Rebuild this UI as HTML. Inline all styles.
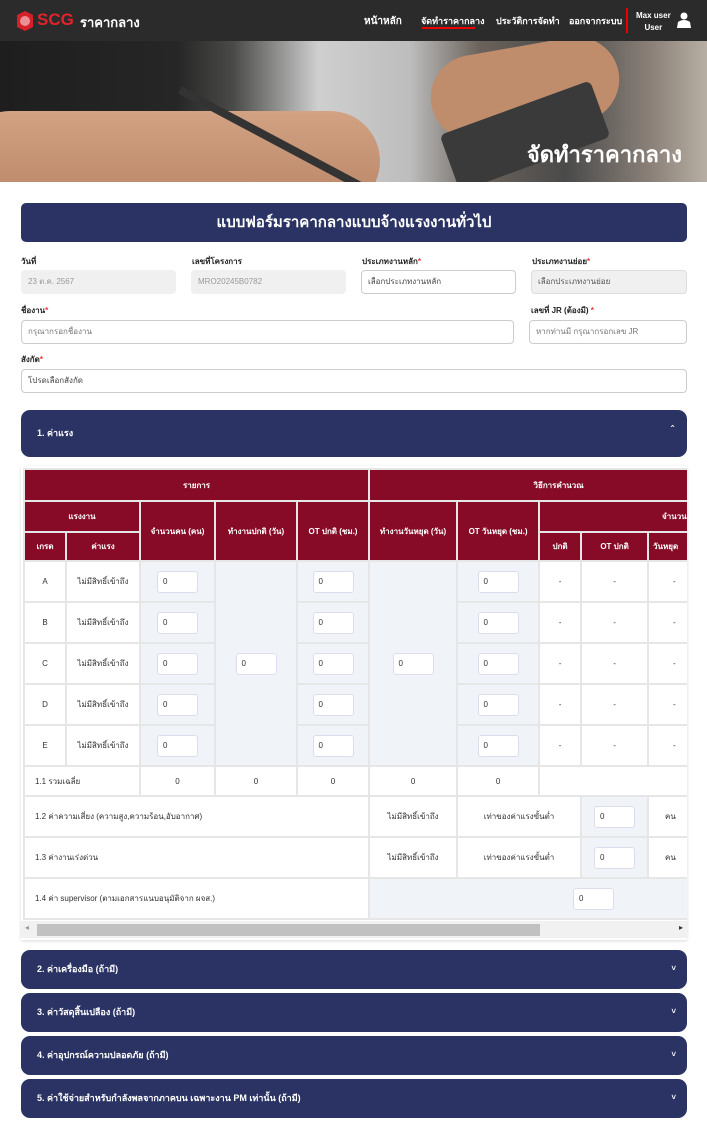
<!DOCTYPE html>
<html><head><meta charset="utf-8">
<style>
*{box-sizing:border-box;margin:0;padding:0}
body{width:707px;height:1124px;overflow:hidden;background:#fff;font-family:"Liberation Sans","DejaVu Sans",sans-serif;color:#222;position:relative}
.nav{position:absolute;left:0;top:0;width:707px;height:41px;background:#2b2b2b;color:#fff}
.nav .l{position:absolute;font-size:10px;font-weight:bold;top:14px}
.hero{position:absolute;top:41px;left:0;width:707px;height:141px;overflow:hidden;
background:linear-gradient(90deg,#1e1e1e 0%,#262626 25%,#4a4a48 33%,#cfcfcf 45%,#bdbdbd 58%,#6a625a 68%,#4a4a4a 80%,#8a8078 92%,#b8afa4 100%)}
.hero .arm{position:absolute;left:-40px;top:70px;width:420px;height:100px;border-radius:50px;background:linear-gradient(180deg,#d2a283,#b88466)}
.hero .hand2{position:absolute;left:430px;top:5px;width:190px;height:85px;border-radius:45px;background:#c08d6c;transform:rotate(-10deg)}
.hero .calc{position:absolute;left:445px;top:65px;width:160px;height:60px;background:#3a3a3a;transform:rotate(-20deg);border-radius:6px}
.hero .pen{position:absolute;left:180px;top:45px;width:230px;height:8px;background:#333;transform:rotate(28deg);transform-origin:left}
.hero h1{position:absolute;right:25px;bottom:10px;color:#fff;font-size:22px;font-weight:bold}
.title{position:absolute;left:21px;top:203px;width:666px;height:39px;background:#2a3363;border-radius:5px;color:#fff;font-weight:bold;font-size:15px;text-align:center;line-height:39px}
.lab{position:absolute;font-size:8px;font-weight:bold;color:#222}
.lab i{color:#e33;font-style:normal}
.inp{position:absolute;height:24px;border:1px solid #ccc;border-radius:4px;font-size:8px;color:#777;line-height:22px;padding-left:6px;background:#fff}
.inp.d{background:#f0f0f0;border-color:#f0f0f0;color:#999}
.acc{position:absolute;left:21px;width:666px;background:#2a3363;border-radius:9px;color:#fff;font-size:9px;font-weight:bold;padding-left:16px}
.acc span.ch{position:absolute;right:11px;font-size:8px}
.tw{position:absolute;left:21px;top:466px;width:666px;height:474px;overflow:hidden;box-shadow:0 1px 3px rgba(0,0,0,.15)}
table{position:absolute;left:2px;top:2px;width:724px;border-collapse:collapse;table-layout:fixed;font-size:8px;color:#333}
td{border:2px solid #e6e6e6;text-align:center;vertical-align:middle;padding:0}
th{border:2px solid #e6e6e6;background:#870b26;color:#fff;font-weight:bold;font-size:8px}
.g{background:#f0f3f8}
.b{display:inline-block;width:41px;height:22px;background:#fff;border:1px solid #dde;border-radius:3px;text-align:left;padding-left:5px;line-height:20px;font-size:8px}
.lt{text-align:left;padding-left:10px}
.sb{position:absolute;left:0;top:455px;width:666px;height:17px;background:#f1f1f1}
.sb .th{position:absolute;left:16px;top:3px;width:503px;height:12px;background:#c1c1c1}
</style></head><body>
<div class="nav">
 <svg style="position:absolute;left:15px;top:10px" width="20" height="22" viewBox="0 0 20 22"><path d="M10 1 L18 5 L18 17 L10 21 L2 17 L2 5Z" fill="#d7212a"/><circle cx="10" cy="11" r="5" fill="#fff" opacity=".5"/></svg>
 <div style="position:absolute;left:37px;top:10px;color:#e2232b;font-size:17px;font-weight:bold">SCG</div>
 <div style="position:absolute;left:80px;top:12px;font-size:13px;font-weight:bold">ราคากลาง</div>
 <div class="l" style="left:364px">หน้าหลัก</div>
 <div class="l" style="left:421px;font-size:9px">จัดทำราคากลาง</div>
 <div style="position:absolute;left:422px;top:27px;width:53px;height:2px;background:#e00"></div>
 <div class="l" style="left:496px;font-size:9px">ประวัติการจัดทำ</div>
 <div class="l" style="left:569px;font-size:9px">ออกจากระบบ</div>
 <div style="position:absolute;left:626px;top:8px;width:2px;height:25px;background:#e00"></div>
 <div style="position:absolute;left:636px;top:10px;font-size:8px;font-weight:bold;text-align:center;line-height:12px">Max user<br>User</div>
 <svg style="position:absolute;left:676px;top:12px" width="16" height="16" viewBox="0 0 16 16"><circle cx="8" cy="4" r="3.5" fill="#fff"/><path d="M1 16 L2 10 Q8 6 14 10 L15 16Z" fill="#fff"/></svg>
</div>
<div class="hero"><div class="hand2"></div><div class="calc"></div><div class="arm"></div><div class="pen"></div><h1>จัดทำราคากลาง</h1></div>
<div class="title">แบบฟอร์มราคากลางแบบจ้างแรงงานทั่วไป</div>
<div class="lab" style="left:21px;top:255px">วันที่</div>
<div class="lab" style="left:192px;top:255px">เลขที่โครงการ</div>
<div class="lab" style="left:362px;top:255px">ประเภทงานหลัก<i>*</i></div>
<div class="lab" style="left:532px;top:255px">ประเภทงานย่อย<i>*</i></div>
<div class="inp d" style="left:21px;top:270px;width:155px">23 ต.ค. 2567</div>
<div class="inp d" style="left:191px;top:270px;width:155px">MRO20245B0782</div>
<div class="inp" style="left:361px;top:270px;width:155px;color:#444">เลือกประเภทงานหลัก</div>
<div class="inp d" style="left:531px;top:270px;width:156px;color:#555;border-color:#ddd">เลือกประเภทงานย่อย</div>
<div class="lab" style="left:21px;top:304px">ชื่องาน<i>*</i></div>
<div class="lab" style="left:531px;top:304px">เลขที่ JR (ต้องมี) <i>*</i></div>
<div class="inp" style="left:21px;top:320px;width:493px">กรุณากรอกชื่องาน</div>
<div class="inp" style="left:529px;top:320px;width:158px">หากท่านมี กรุณากรอกเลข JR</div>
<div class="lab" style="left:21px;top:353px">สังกัด<i>*</i></div>
<div class="inp" style="left:21px;top:369px;width:666px;color:#444">โปรดเลือกสังกัด</div>
<div class="acc" style="top:410px;height:47px;line-height:46px">1. ค่าแรง<span class="ch" style="top:-4px">⌃</span></div>
<div class="tw">
<table>
<colgroup><col style="width:42px"><col style="width:74px"><col style="width:75px"><col style="width:82px"><col style="width:72px"><col style="width:88px"><col style="width:82px"><col style="width:42px"><col style="width:67px"><col style="width:100px"></colgroup>
<tr style="height:32px"><th colspan="5">รายการ</th><th colspan="5">วิธีการคำนวณ</th></tr>
<tr style="height:31px"><th colspan="2">แรงงาน</th><th rowspan="2">จำนวนคน (คน)</th><th rowspan="2">ทำงานปกติ (วัน)</th><th rowspan="2">OT ปกติ (ชม.)</th><th rowspan="2">ทำงานวันหยุด (วัน)</th><th rowspan="2">OT วันหยุด (ชม.)</th><th colspan="3" style="text-align:left;padding-left:122px">จำนวนเงิน</th></tr>
<tr style="height:29px"><th>เกรด</th><th>ค่าแรง</th><th>ปกติ</th><th>OT ปกติ</th><th style="text-align:left;padding-left:4px">วันหยุด</th></tr>
<tr style="height:41px"><td>A</td><td>ไม่มีสิทธิ์เข้าถึง</td><td class="g"><span class="b">0</span></td><td class="g" rowspan="5"><span class="b">0</span></td><td class="g"><span class="b">0</span></td><td class="g" rowspan="5"><span class="b">0</span></td><td class="g"><span class="b">0</span></td><td>-</td><td>-</td><td style="text-align:left;padding-left:24px">-</td></tr>
<tr style="height:41px"><td>B</td><td>ไม่มีสิทธิ์เข้าถึง</td><td class="g"><span class="b">0</span></td><td class="g"><span class="b">0</span></td><td class="g"><span class="b">0</span></td><td>-</td><td>-</td><td style="text-align:left;padding-left:24px">-</td></tr>
<tr style="height:41px"><td>C</td><td>ไม่มีสิทธิ์เข้าถึง</td><td class="g"><span class="b">0</span></td><td class="g"><span class="b">0</span></td><td class="g"><span class="b">0</span></td><td>-</td><td>-</td><td style="text-align:left;padding-left:24px">-</td></tr>
<tr style="height:41px"><td>D</td><td>ไม่มีสิทธิ์เข้าถึง</td><td class="g"><span class="b">0</span></td><td class="g"><span class="b">0</span></td><td class="g"><span class="b">0</span></td><td>-</td><td>-</td><td style="text-align:left;padding-left:24px">-</td></tr>
<tr style="height:41px"><td>E</td><td>ไม่มีสิทธิ์เข้าถึง</td><td class="g"><span class="b">0</span></td><td class="g"><span class="b">0</span></td><td class="g"><span class="b">0</span></td><td>-</td><td>-</td><td style="text-align:left;padding-left:24px">-</td></tr>
<tr style="height:30px"><td colspan="2" class="lt">1.1 รวมเฉลี่ย</td><td>0</td><td>0</td><td>0</td><td>0</td><td>0</td><td colspan="3"></td></tr>
<tr style="height:41px"><td colspan="5" class="lt">1.2 ค่าความเสี่ยง (ความสูง,ความร้อน,อับอากาศ)</td><td>ไม่มีสิทธิ์เข้าถึง</td><td colspan="2">เท่าของค่าแรงขั้นต่ำ</td><td class="g"><span class="b">0</span></td><td style="text-align:left;padding-left:16px">คน</td></tr>
<tr style="height:41px"><td colspan="5" class="lt">1.3 ค่างานเร่งด่วน</td><td>ไม่มีสิทธิ์เข้าถึง</td><td colspan="2">เท่าของค่าแรงขั้นต่ำ</td><td class="g"><span class="b">0</span></td><td style="text-align:left;padding-left:16px">คน</td></tr>
<tr style="height:41px"><td colspan="5" class="lt">1.4 ค่า supervisor (ตามเอกสารแนบอนุมัติจาก ผจส.)</td><td colspan="5" class="g" style="text-align:left;padding-left:203px"><span class="b">0</span></td></tr>
</table>
<div class="sb"><span style="position:absolute;left:4px;top:2px;font-size:8px;color:#999">◂</span><div class="th"></div><span style="position:absolute;right:4px;top:2px;font-size:8px;color:#333">▸</span></div>
</div>
<div class="acc" style="top:950px;height:39px;line-height:38px">2. ค่าเครื่องมือ (ถ้ามี)<span class="ch" style="top:0">˅</span></div>
<div class="acc" style="top:993px;height:39px;line-height:38px">3. ค่าวัสดุสิ้นเปลือง (ถ้ามี)<span class="ch" style="top:0">˅</span></div>
<div class="acc" style="top:1036px;height:39px;line-height:38px">4. ค่าอุปกรณ์ความปลอดภัย (ถ้ามี)<span class="ch" style="top:0">˅</span></div>
<div class="acc" style="top:1079px;height:39px;line-height:38px">5. ค่าใช้จ่ายสำหรับกำลังพลจากภาคบน เฉพาะงาน PM เท่านั้น (ถ้ามี)<span class="ch" style="top:0">˅</span></div>
</body></html>
